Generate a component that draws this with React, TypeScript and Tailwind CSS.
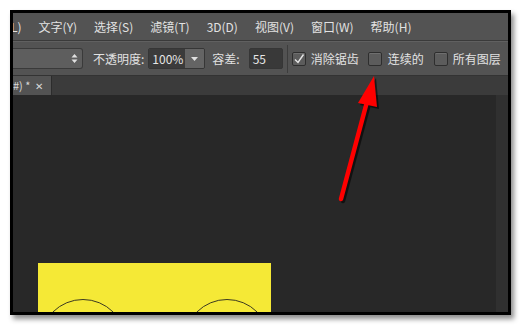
const menus = ["文字(Y)", "选择(S)", "滤镜(T)", "3D(D)", "视图(V)", "窗口(W)", "帮助(H)"];

const font = "font-['Noto_Sans_CJK_SC','Noto_Sans',sans-serif]";

const Check = ({ on }: { on?: boolean }) => (
  <span className="flex h-[14px] w-[14px] items-center justify-center rounded-[2px] border border-[#2e2e2e] bg-[#5c5c5c] shadow-[inset_0_1px_0_rgba(255,255,255,0.12)]">
    {on && (
      <svg width="12" height="12" viewBox="0 0 12 12">
        <path d="M2 6.5 L5 9.5 L10.5 1.5" fill="none" stroke="#e6e6e6" strokeWidth="1.4" />
      </svg>
    )}
  </span>
);

export default function App() {
  return (
    <div className={`relative h-[327px] w-[522px] overflow-hidden bg-white pl-[10px] pt-[10px] ${font}`}>
      <div className="flex h-[305px] w-[501px] flex-col overflow-hidden border-[3px] border-black bg-[#282828] shadow-[3px_4px_5px_rgba(0,0,0,0.45)]">
        {/* menu bar */}
        <div className="flex h-[28px] shrink-0 items-center gap-[17px] border-b border-[#3a3a3a] bg-[#535353] text-[12px] text-[#e2e2e2]">
          <span className="-ml-[2px]">L)</span>
          {menus.map((m) => (
            <span key={m}>{m}</span>
          ))}
        </div>

        {/* options bar */}
        <div className="flex h-[35px] shrink-0 items-center border-b border-[#333] border-t border-t-[#606060] bg-[#535353] text-[12px] text-[#e2e2e2]">
          <div className="flex h-[21px] w-[70px] items-center justify-end rounded-r-[3px] border border-l-0 border-[#3a3a3a] bg-[#5e5e5e] pr-[4px]">
            <svg width="7" height="11" viewBox="0 0 7 11">
              <path d="M0.5 4.5 L3.5 1 L6.5 4.5 Z M0.5 6.5 L3.5 10 L6.5 6.5 Z" fill="#e0e0e0" />
            </svg>
          </div>
          <span className="ml-[10px]">不透明度:</span>
          <div className="ml-[4px] flex h-[21px] items-center overflow-hidden rounded-[2px] border border-[#363636]">
            <span className="flex h-full w-[36px] items-center bg-[#3b3b3b] pl-[3px] text-[#e6e6e6]">100%</span>
            <span className="flex h-full w-[19px] items-center justify-center bg-[#646464]">
              <svg width="7" height="4" viewBox="0 0 7 4">
                <path d="M0 0 L7 0 L3.5 4 Z" fill="#e0e0e0" />
              </svg>
            </span>
          </div>
          <span className="ml-[7px]">容差:</span>
          <span className="ml-[9px] flex h-[21px] w-[34px] items-center rounded-[2px] border border-[#363636] bg-[#393939] pl-[3px] text-[#e6e6e6]">
            55
          </span>
          <span className="ml-[4px] h-[28px] w-px bg-[#3d3d3d]" />
          <span className="ml-[4px]">
            <Check on />
          </span>
          <span className="ml-[5px]">消除锯齿</span>
          <span className="ml-[9px]">
            <Check />
          </span>
          <span className="ml-[6px]">连续的</span>
          <span className="ml-[10px]">
            <Check />
          </span>
          <span className="ml-[5px]">所有图层</span>
        </div>

        {/* tab bar */}
        <div className="flex h-[19px] shrink-0 bg-[#3b3b3b] text-[11px] text-[#d8d8d8]">
          <div className="flex w-[39px] items-center gap-[5px] border-r border-[#2c2c2c] bg-[#535353] leading-none">
            <span>#) *</span>
            <span className="text-[10px]">✕</span>
          </div>
        </div>

        {/* canvas */}
        <div className="flex min-h-0 flex-1">
          <div className="flex-1 overflow-hidden pl-[25px] pt-[168px]">
            <div className="relative h-[60px] w-[233px] overflow-hidden bg-[#f5e936]">
              <span className="absolute left-[2px] top-[36px] h-[86px] w-[86px] rounded-full border border-[#3c3a20]" />
              <span className="absolute left-[146px] top-[36px] h-[86px] w-[86px] rounded-full border border-[#3c3a20]" />
            </div>
          </div>
          <div className="w-[12px] bg-[#303030]" />
        </div>
      </div>

      {/* red arrow annotation */}
      <svg className="pointer-events-none absolute left-0 top-0" width="522" height="327" viewBox="0 0 522 327">
        <g transform="translate(2,2)" opacity="0.55">
          <line x1="341" y1="199" x2="368" y2="98" stroke="#000" strokeWidth="4.5" strokeLinecap="round" />
          <polygon points="374,76 358,103 377,107" fill="#000" />
        </g>
        <line x1="341" y1="199" x2="368" y2="98" stroke="#ff0000" strokeWidth="4.5" strokeLinecap="round" />
        <polygon points="374,76 358,103 377,107" fill="#ff0000" />
      </svg>
    </div>
  );
}
